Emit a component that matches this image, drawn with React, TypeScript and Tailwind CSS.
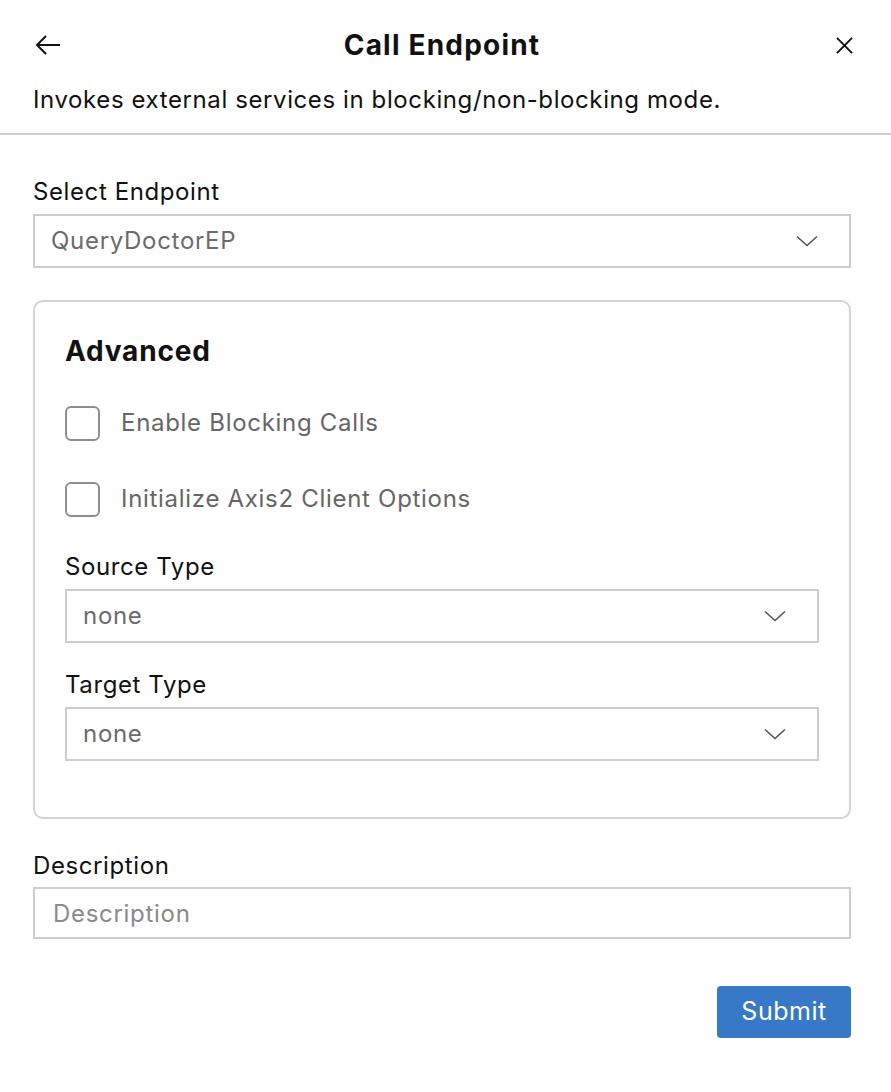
import { useState } from "react";

const Chevron = () => (
  <svg width="22" height="12" viewBox="0 0 22 12" fill="none" className="shrink-0">
    <path d="M1 1.5L11 10.5L21 1.5" stroke="#555" strokeWidth="1.6" />
  </svg>
);

const Select = ({ value }: { value: string }) => (
  <div className="flex items-center justify-between h-[54px] border-2 border-[#cdcdcd] pl-[16px] pr-[31px] bg-white">
    <span className="text-[24px] tracking-[0.7px] text-[#6b6b6b]">{value}</span>
    <Chevron />
  </div>
);

const Check = ({ label }: { label: string }) => {
  const [on, setOn] = useState<boolean>(false);
  return (
    <label className="flex items-center gap-[21px] h-[34px] cursor-pointer" onClick={() => setOn(!on)}>
      <span className="w-[35px] h-[35px] rounded-[6px] border-2 border-[#8e8e8e] bg-white" />
      <span className="text-[24px] tracking-[0.7px] text-[#666666]">{label}</span>
    </label>
  );
};

export default function App() {
  return (
    <div className="w-full min-h-[1092px] bg-white text-[#111] font-['Inter','Liberation_Sans',sans-serif]">
      <div className="flex items-center justify-between h-[56px] mt-[17px] pl-[35px] pr-[38px]">
        <svg width="26" height="20" viewBox="0 0 26 20" fill="none">
          <path d="M25 10H2M11 1L2 10L11 19" stroke="#111" strokeWidth="2" />
        </svg>
        <h1 className="text-[28px] font-bold tracking-[1.2px] ml-[-13px]">Call Endpoint</h1>
        <svg width="17" height="17" viewBox="0 0 18 18" fill="none">
          <path d="M1 1L17 17M17 1L1 17" stroke="#111" strokeWidth="2" />
        </svg>
      </div>
      <p className="px-[33px] mt-[12px] text-[24px] tracking-[0.6px] leading-[30px]">
        Invokes external services in blocking/non-blocking mode.
      </p>
      <div className="h-[2px] bg-[#cfcfcf] mt-[18px]" />

      <div className="px-[33px] pr-[40px]">
        <div className="mt-[42px] text-[24px] tracking-[0.6px] leading-[30px]">Select Endpoint</div>
        <div className="mt-[7px]">
          <Select value="QueryDoctorEP" />
        </div>

        <div className="mt-[32px] border-2 border-[#d3d3d3] rounded-[10px] pt-[31px] pb-[56px] px-[30px]">
          <h2 className="text-[28px] font-bold leading-[36px] tracking-[0.8px]">Advanced</h2>
          <div className="mt-[37px] flex flex-col gap-[42px]">
            <Check label="Enable Blocking Calls" />
            <Check label="Initialize Axis2 Client Options" />
          </div>
          <div className="mt-[36px] text-[24px] tracking-[0.6px] leading-[30px]">Source Type</div>
          <div className="mt-[7px]">
            <Select value="none" />
          </div>
          <div className="mt-[27px] text-[24px] tracking-[0.6px] leading-[30px]">Target Type</div>
          <div className="mt-[7px]">
            <Select value="none" />
          </div>
        </div>

        <div className="mt-[32px] text-[24px] tracking-[0.6px] leading-[30px]">Description</div>
        <input
          placeholder="Description"
          className="mt-[6px] w-full h-[52px] border-2 border-[#cdcdcd] px-[18px] text-[24px] tracking-[0.7px] text-[#333] placeholder:text-[#8a8a8a] outline-none"
        />
        <div className="flex justify-end mt-[47px]">
          <button className="w-[134px] h-[52px] rounded-[4px] bg-[#3779c6] text-white text-[25px] tracking-[0.5px]">Submit</button>
        </div>
      </div>
    </div>
  );
}
